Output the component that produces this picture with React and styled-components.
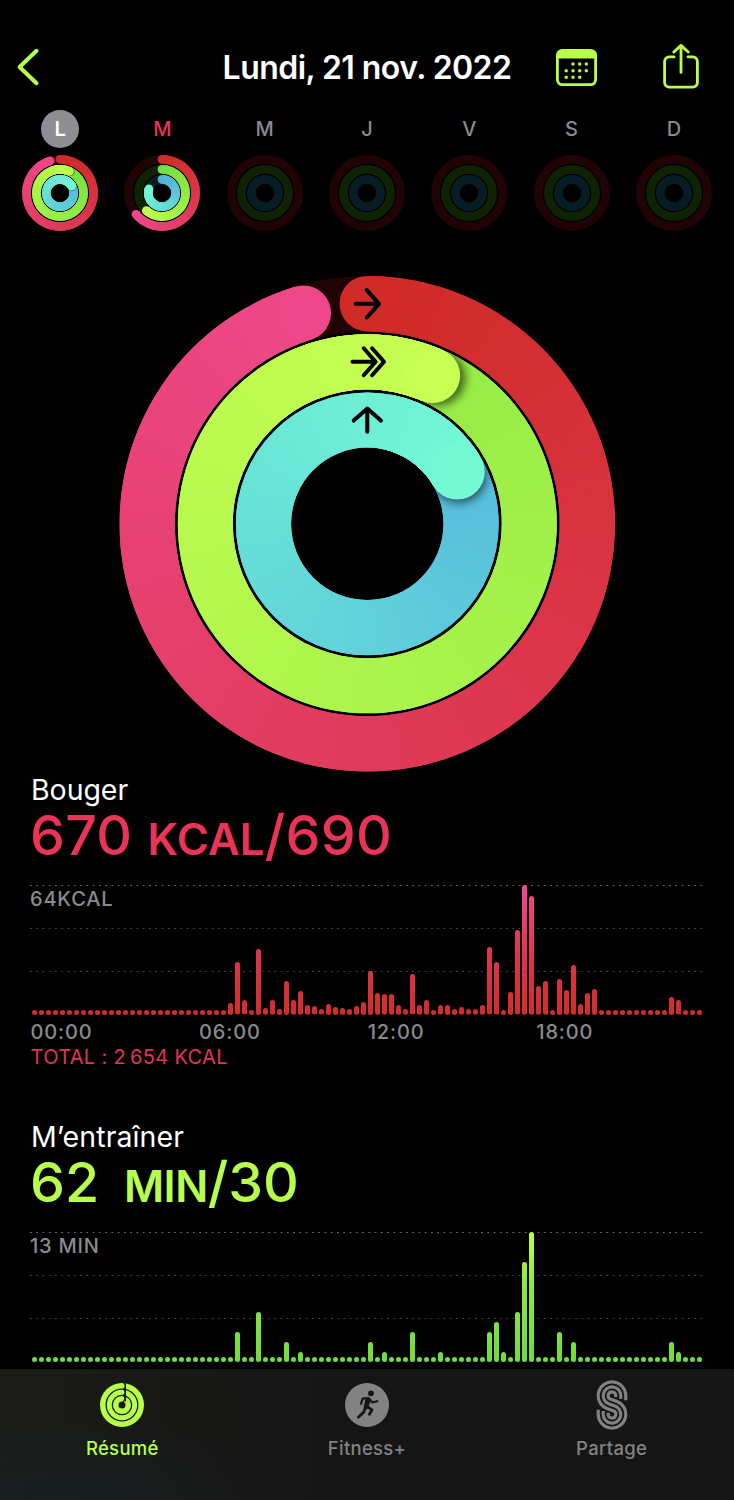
import styled, { createGlobalStyle } from 'styled-components';

const MOVE = { from: [208, 43, 38], to: [238, 72, 138], track: '#200305' };
const EXERCISE = { from: [114, 224, 62], to: [190, 255, 76], track: '#0f2204' };
const STAND = { from: [82, 178, 222], to: [115, 250, 212], track: '#071d26' };

const DAYS = [
  { label: 'L', selected: true, rings: [343, 383.7, 420] },
  { label: 'M', today: true, rings: [230.7, 221.6, 287.5] },
  { label: 'M' },
  { label: 'J' },
  { label: 'V' },
  { label: 'S' },
  { label: 'D' },
];

const MOVE_BARS = {
  28: 12, 29: 52.3, 30: 14.3, 32: 66, 33: 6.7, 34: 14.7, 35: 6, 36: 34, 37: 14.7,
  38: 23.7, 39: 9.7, 40: 8.3, 41: 5.5, 42: 11, 43: 8, 44: 6.7, 45: 6, 46: 8.7, 47: 13,
  48: 44, 49: 21.7, 50: 20.7, 51: 20.7, 52: 9.7, 53: 5.7, 54: 40.3, 55: 9.7, 56: 14.7,
  58: 9.3, 59: 10, 60: 6, 61: 7.7, 62: 5.5, 63: 5.5, 64: 9.7, 65: 67.3, 66: 52.3,
  68: 23, 69: 84.3, 70: 129.7, 71: 118.7, 72: 28.7, 73: 33.7, 75: 36, 76: 24.7,
  77: 49.7, 78: 10.7, 79: 22, 80: 26, 91: 18, 92: 14.3,
};

const EXERCISE_BARS = {
  29: 30, 32: 50, 36: 20, 38: 10, 48: 20, 50: 10, 54: 30, 58: 10, 65: 30, 66: 40,
  67: 10, 69: 50, 70: 100, 71: 130, 75: 30, 77: 20, 91: 20, 92: 10,
};

const HOURS = ['00:00', '06:00', '12:00', '18:00'];

const point = (r, deg) => {
  const a = (deg * Math.PI) / 180;
  return [r * Math.sin(a), -r * Math.cos(a)];
};

const mix = (from, to, t) =>
  `rgb(${from.map((c, i) => Math.round(c + (to[i] - c) * t)).join(',')})`;

const arc = (r, a, b) => {
  const [x1, y1] = point(r, a);
  const [x2, y2] = point(r, b);
  return `M${x1} ${y1}A${r} ${r} 0 0 1 ${x2} ${y2}`;
};

function Ring({ id, r, width, end = 0, tone, step }) {
  const [ex, ey] = point(r, end);
  const segments = [];
  // past one full lap only the last 360 degrees stay visible
  const first = Math.max(0, end - 360);
  for (let a = first; a < end; a += step) segments.push(a);
  const color = (a) => mix(tone.from, tone.to, a / end);
  const draw = (a) => (
    <path key={a} d={arc(r, a, Math.min(end, a + step * 2))} stroke={color(a)} strokeWidth={width + 1.5} />
  );

  return (
    <g fill='none'>
      <clipPath id={`${id}-clip`}>
        <path
          clipRule='evenodd'
          d={[r + width / 2, r - width / 2]
            .map((q) => `M${-q} 0A${q} ${q} 0 1 1 ${q} 0A${q} ${q} 0 1 1 ${-q} 0Z`)
            .join('')}
        />
      </clipPath>
      <circle r={r} stroke={tone.track} strokeWidth={width} />
      {end > 0 && first === 0 && <circle cy={-r} r={width / 2} fill={color(0)} />}
      <g clipPath={`url(#${id}-clip)`}>
        {segments.map(draw)}
        {first > 0 && (
          <circle
            cx={point(r, end + 2)[0]}
            cy={point(r, end + 2)[1]}
            r={width / 2}
            fill='#000'
            opacity='0.6'
            style={{ filter: `blur(${width / 11}px)` }}
          />
        )}
        {first > 0 && segments.filter((a) => a > end - 50).map(draw)}
      </g>
      {end > 0 && <circle cx={ex} cy={ey} r={width / 2} fill={color(end)} />}
    </g>
  );
}

function WeekRings({ id, rings = [0, 0, 0] }) {
  return (
    <svg width='76' height='76' viewBox='-38 -38 76 76'>
      <Ring id={`${id}m`} r={33.6} width={8.7} end={rings[0]} tone={MOVE} step={4} />
      <Ring id={`${id}e`} r={23.6} width={8.7} end={rings[1]} tone={EXERCISE} step={4} />
      <Ring id={`${id}s`} r={13.7} width={8.7} end={rings[2]} tone={STAND} step={4} />
    </svg>
  );
}

const BIG_EXERCISE = { ...EXERCISE, from: [148, 235, 70], to: [199, 255, 82] };

function ActivityRings() {
  return (
    <svg width='496' height='496' viewBox='-248.3 -247.8 496 496'>
      <Ring id='move' r={220.1} width={55.4} end={343.1} tone={MOVE} step={1.5} />
      <Ring id='exercise' r={162} width={55} end={383.8} tone={BIG_EXERCISE} step={1.5} />
      <Ring id='stand' r={103.8} width={55.2} end={420} tone={STAND} step={1.5} />
      <g fill='none' stroke='#000' strokeWidth='4' strokeLinecap='round' strokeLinejoin='round'>
        <path d='M-11.5 -220H11.5M-0.5 -233.7L11.7 -220L-0.5 -206.3' />
        <path d='M-14.8 -162H8M-3.6 -175.5L8.3 -162L-3.6 -148.5M4.8 -175.5L16.7 -162L4.8 -148.5' />
        <path d='M0 -114.5V-92M-13.6 -103.2L0 -115.2L13.6 -103.2' />
      </g>
    </svg>
  );
}

const BackIcon = () => (
  <svg width='26' height='40' viewBox='0 0 26 40' fill='none' stroke='#b8ff4c' strokeWidth='4' strokeLinecap='round' strokeLinejoin='round'>
    <path d='M20.5 3.8L3.6 20L20.5 36.2' />
  </svg>
);

const CalendarIcon = () => (
  <svg width='41' height='37' viewBox='0 0 41 37' fill='#b8ff4c'>
    <rect x='1.4' y='1.4' width='38.2' height='34.2' rx='5' fill='none' stroke='#b8ff4c' strokeWidth='2.8' />
    <path d='M1 9.6V6a5 5 0 0 1 5-5h29a5 5 0 0 1 5 5v3.6z' />
    {[[17, 15], [23.7, 15], [30.3, 15], [10.2, 21.7], [17, 21.7], [23.7, 21.7], [30.3, 21.7], [10.2, 28.3], [17, 28.3], [23.7, 28.3]].map(
      ([x, y]) => (
        <rect key={`${x}-${y}`} x={x - 1.5} y={y - 1.5} width='3' height='3' rx='0.6' />
      )
    )}
  </svg>
);

const ShareIcon = () => (
  <svg width='36' height='46' viewBox='0 0 36 46' fill='none' stroke='#b8ff4c' strokeWidth='2.8' strokeLinecap='round' strokeLinejoin='round'>
    <path d='M11 12.9H6.2A4.5 4.5 0 0 0 1.6 17.4V38.6A4.5 4.5 0 0 0 6.2 43.1H29.8A4.5 4.5 0 0 0 34.4 38.6V17.4A4.5 4.5 0 0 0 29.8 12.9H25' />
    <path d='M18 1.6V28.4M10.8 8L18 1.4L25.2 8' />
  </svg>
);

const SummaryIcon = () => (
  <svg width='44' height='50' viewBox='-22 -25 44 50' fill='none' strokeLinecap='round'>
    <circle r='22' fill='#b8ff4c' />
    <circle r='3.5' fill='#1a1c18' />
    <g stroke='#1a1c18' strokeWidth='1.3'>
      <circle r='15.8' />
      <circle r='9.7' />
      <path d='M3.4 -21.8V-3.4' strokeLinecap='butt' />
      <path d='M1.6 -22.4Q5.2 -19 1.6 -16M1.6 -15.6Q4.6 -12.6 1.6 -9.8M1.6 -9.4Q4.4 -6.5 1.4 -3.6' />
    </g>
  </svg>
);

const FitnessIcon = () => (
  <svg width='44' height='50' viewBox='-22 -25 44 50' fill='none' stroke='#161616' strokeLinecap='round' strokeLinejoin='round'>
    <circle r='22' fill='#828282' stroke='none' />
    <circle cx='4' cy='-11.7' r='2.9' fill='#161616' stroke='none' />
    <path d='M1 -5.4L-0.8 1.6' strokeWidth='5' />
    <path d='M1 -7L-4.4 -6.4L-6 -1.2M2.4 -6L5.2 -2.6L10.3 -3.8' strokeWidth='2.2' />
    <path d='M-1.4 2L-3.2 7L-8.6 12.3M0 1.4L5 4.8L2.4 9.4' strokeWidth='2.8' />
  </svg>
);

// three parallel strokes, the outermost of the top bowl is the innermost of the bottom one
function SharingIcon() {
  const cy = 9.3;
  const ends = { 13.8: 4.6, 8.8: 3.4, 3.8: 1.6 };
  const lines = [13.8, 8.8, 3.8].map((top, i, radii) => {
    const bottom = radii[2 - i];
    const ny = 17.6 / (2 * cy);
    const nx = -Math.sqrt(1 - ny * ny);
    return [
      `M${top} ${-cy + ends[top]}V${-cy}`,
      `A${top} ${top} 0 1 0 ${top * nx} ${-cy + top * ny}`,
      `L${-bottom * nx} ${cy - bottom * ny}`,
      `A${bottom} ${bottom} 0 1 1 ${-bottom} ${cy}V${cy - ends[bottom]}`,
    ].join('');
  });

  return (
    <svg width='44' height='50' viewBox='-22 -25 44 50' fill='none' stroke='#828282' strokeWidth='3.1'>
      {lines.map((d) => (
        <path key={d} d={d} />
      ))}
    </svg>
  );
}

function BarChart({ label, data, colors }) {
  return (
    <Chart>
      <GridLine $strong>
        <ChartLabel>{label}</ChartLabel>
      </GridLine>
      <GridLine />
      <GridLine />
      <Bars>
        {Array.from({ length: 96 }, (_, i) => (
          <Bar key={i} $colors={colors} style={{ height: data[i] || 5 }} />
        ))}
      </Bars>
    </Chart>
  );
}

function App() {
  return (
    <Screen>
      <GlobalStyle />
      <Header>
        <BackIcon />
        <Title>Lundi, 21 nov. 2022</Title>
        <Actions>
          <CalendarIcon />
          <ShareIcon />
        </Actions>
      </Header>

      <Week>
        {DAYS.map((day, i) => (
          <Day key={i}>
            <DayLabel $selected={day.selected} $today={day.today}>
              {day.label}
            </DayLabel>
            <WeekRings id={`day${i}`} rings={day.rings} />
          </Day>
        ))}
      </Week>

      <Hero>
        <ActivityRings />
      </Hero>

      <Metric>
        <MetricName $spacing='-0.05px'>Bouger</MetricName>
        <MetricValue $color='#e93457' $spacing='0.25px'>
          670 <Unit $spacing='0.3px'>KCAL</Unit>/690
        </MetricValue>
        <BarChart label='64KCAL' data={MOVE_BARS} colors='#d42c28, #dc3650 50%, #ef4a94' />
        <Hours>
          {HOURS.map((hour) => (
            <span key={hour}>{hour}</span>
          ))}
        </Hours>
        <Total>TOTAL : 2&#8201;654 KCAL</Total>
      </Metric>

      <Metric>
        <MetricName $spacing='0.1px'>M’entraîner</MetricName>
        <MetricValue $color='#b8ff4c' $spacing='0'>
          62 <Unit $indent='10px' $spacing='-0.5px'>MIN</Unit>/30
        </MetricValue>
        <BarChart label='13 MIN' data={EXERCISE_BARS} colors='#70dc3c, #8ce844 60%, #bcff4c' />
      </Metric>

      <TabBar>
        <Tab $active>
          <SummaryIcon />
          Résumé
        </Tab>
        <Tab>
          <FitnessIcon />
          Fitness+
        </Tab>
        <Tab>
          <SharingIcon />
          Partage
        </Tab>
      </TabBar>
    </Screen>
  );
}

export default App;

const GlobalStyle = createGlobalStyle`
  body {
    margin: 0;
    background: #000;
    font-family: Inter, 'Liberation Sans', sans-serif;
  }

  svg {
    display: block;
    flex-shrink: 0;
  }
`;

const Screen = styled.div`
  display: flex;
  flex-direction: column;
  width: 734px;
  height: 1500px;
  overflow: hidden;
  background: #000;
  color: #fff;
`;

const Header = styled.header`
  display: grid;
  grid-template-columns: 1fr auto 1fr;
  align-items: center;
  height: 66px;
  padding: 34px 35px 10px 16px;
`;

const Title = styled.h1`
  margin: 0;
  padding: 1px 0 0 19px;
  font-size: 32px;
  font-weight: 600;
  line-height: 40px;
  letter-spacing: -0.55px;
  white-space: nowrap;
`;

const Actions = styled.div`
  display: flex;
  align-items: center;
  justify-content: flex-end;
  gap: 66px;
`;

const Week = styled.div`
  display: grid;
  grid-template-columns: repeat(7, 1fr);
  padding: 0 9px;
`;

const Day = styled.div`
  display: flex;
  flex-direction: column;
  align-items: center;
  gap: 7px;
`;

const DayLabel = styled.span`
  width: 38px;
  border-radius: 50%;
  background: ${(props) => (props.$selected ? '#8e8d93' : 'transparent')};
  color: ${(props) => (props.$selected ? '#fff' : props.$today ? '#ea3358' : '#8a8a8e')};
  font-size: 20px;
  font-weight: ${(props) => (props.$selected ? 600 : 500)};
  line-height: 38px;
  text-align: center;
`;

const Hero = styled.div`
  display: flex;
  justify-content: center;
  height: 496px;
  padding: 44.5px 0 1.5px;
`;

const Metric = styled.section`
  flex-shrink: 0;
  height: 347px;
  padding: 0 30px;
  box-sizing: border-box;

  &:nth-of-type(2) {
    height: 249px;
  }
`;

const MetricName = styled.h2`
  margin: 0;
  padding-left: 1px;
  font-size: 28.5px;
  font-weight: 400;
  line-height: 34px;
  letter-spacing: ${(props) => props.$spacing};
`;

const MetricValue = styled.div`
  height: 77.5px;
  color: ${(props) => props.$color};
  font-size: 55.5px;
  font-weight: 500;
  line-height: 56px;
  letter-spacing: ${(props) => props.$spacing};
  white-space: nowrap;
`;

const Unit = styled.span`
  margin-left: ${(props) => props.$indent || 0};
  font-size: 43.5px;
  font-weight: 600;
  letter-spacing: ${(props) => props.$spacing};
`;

const Chart = styled.div`
  display: grid;
  grid-template-rows: repeat(3, 43px);
  position: relative;
  height: 130px;
`;

const GridLine = styled.div`
  background-image: linear-gradient(
    90deg,
    ${(props) => (props.$strong ? '#6a6a6c' : '#464648')} 1.5px,
    transparent 1.5px
  );
  background-repeat: repeat-x;
  background-size: 6.27px 1px;
`;

const ChartLabel = styled.div`
  padding-top: 2px;
  color: #8a8a8e;
  font-size: 20px;
  font-weight: 500;
  line-height: 24px;
  letter-spacing: 0.8px;
`;

const Bars = styled.div`
  position: absolute;
  inset: 0 1.6px 0 1.8px;
  display: flex;
  align-items: flex-end;
  justify-content: space-between;
`;

const Bar = styled.i`
  width: 5px;
  border-radius: 2.5px;
  background: linear-gradient(to top, ${(props) => props.$colors}) bottom / 100% 130px no-repeat;
`;

const Hours = styled.div`
  display: grid;
  grid-template-columns: repeat(4, 168.6px);
  padding: 5px 0 0 0.5px;
  color: #8a8a8e;
  font-size: 20px;
  font-weight: 500;
  line-height: 24px;
  letter-spacing: 0.85px;
`;

const Total = styled.div`
  padding-left: 0.5px;
  color: #e0345a;
  font-size: 20px;
  line-height: 26px;
  letter-spacing: 0.33px;
`;

const TabBar = styled.nav`
  display: grid;
  grid-template-columns: repeat(3, 1fr);
  flex: 1;
  background: radial-gradient(ellipse 220px 90px at 8% 105%, #171e21, transparent),
    linear-gradient(90deg, #1a1c17, #151515 50%, #161616);
`;

const Tab = styled.div`
  display: flex;
  flex-direction: column;
  align-items: center;
  gap: 6px;
  padding-top: 11px;
  color: ${(props) => (props.$active ? '#b8ff4c' : '#828282')};
  font-size: 18.5px;
  font-weight: 500;
  line-height: 24px;
  letter-spacing: 0.3px;
`;
